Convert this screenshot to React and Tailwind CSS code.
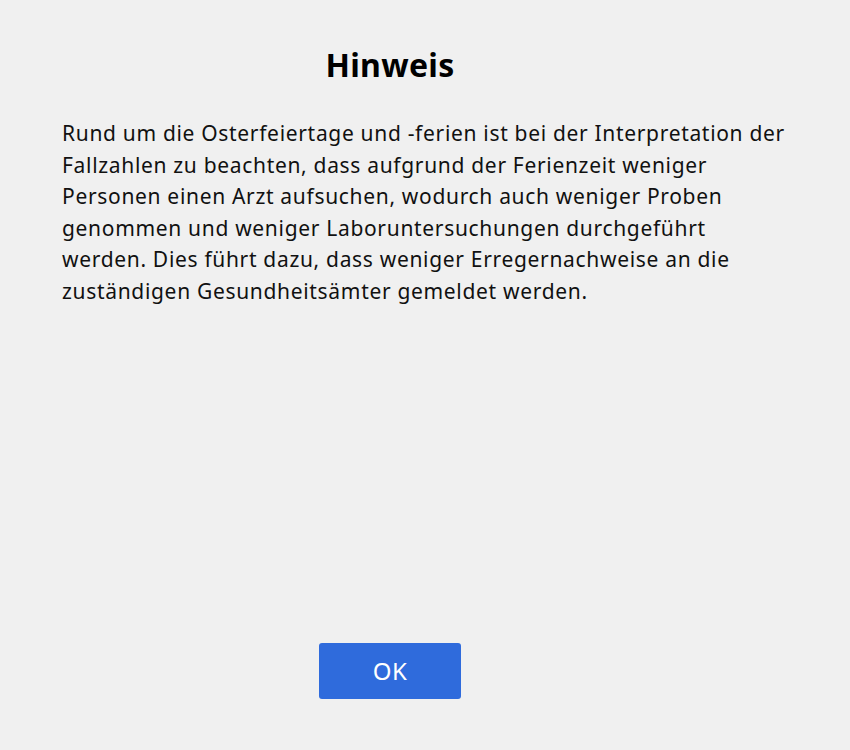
const lines = [
  "Rund um die Osterfeiertage und -ferien ist bei der Interpretation der",
  "Fallzahlen zu beachten, dass aufgrund der Ferienzeit weniger",
  "Personen einen Arzt aufsuchen, wodurch auch weniger Proben",
  "genommen und weniger Laboruntersuchungen durchgeführt",
  "werden. Dies führt dazu, dass weniger Erregernachweise an die",
  "zuständigen Gesundheitsämter gemeldet werden.",
];

export default function App() {
  return (
    <div className="w-[850px] h-[750px] bg-[#f0f0f0] font-['Noto_Sans','Open_Sans',sans-serif] text-[#111]">
      <div className="w-[780px] h-full flex flex-col">
        <h1 className="mt-[44px] text-center text-[32px] leading-[42px] font-bold tracking-[0.3px] text-black">Hinweis</h1>
        <div className="mt-[32px] pl-[62px] text-[21px] leading-[31.6px] tracking-[0.68px] whitespace-nowrap">
          {lines.map((l) => (
            <div key={l}>{l}</div>
          ))}
        </div>
        <div className="mt-auto mb-[51px] flex justify-center">
          <button className="w-[142px] h-[56px] rounded-[3px] bg-[#2f6bdc] text-white text-[24px] tracking-[0.5px]">
            OK
          </button>
        </div>
      </div>
    </div>
  );
}
